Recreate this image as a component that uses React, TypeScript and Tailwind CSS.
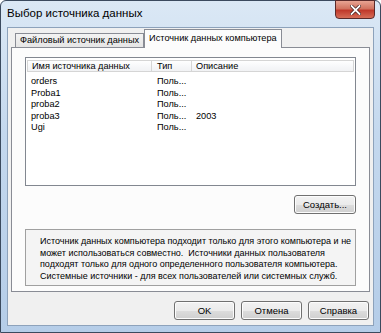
import React from 'react';

// Диалог "Выбор источника данных" (Windows 7, Aero)

const rows = [
  { name: 'orders', type: 'Поль...', desc: '' },
  { name: 'Proba1', type: 'Поль...', desc: '' },
  { name: 'proba2', type: 'Поль...', desc: '' },
  { name: 'proba3', type: 'Поль...', desc: '2003' },
  { name: 'Ugi', type: 'Поль...', desc: '' },
];

const infoLines = [
  'Источник данных компьютера подходит только для этого компьютера и не',
  'может использоваться совместно.\u00a0 Источники данных пользователя',
  'подходят только для одного определенного пользователя компьютера.',
  'Системные источники - для всех пользователей или системных служб.',
];

function WinButton({ children, className = '' }: { children: React.ReactNode; className?: string }) {
  return (
    <button
      className={`h-[19px] w-[61px] shrink-0 rounded-[3px] border border-[#707070] bg-[linear-gradient(180deg,#f2f2f2_0%,#ebebeb_50%,#dddddd_51%,#cfcfcf_100%)] text-[9.5px] leading-none text-black shadow-[inset_0_0_0_1px_#fcfcfc] ${className}`}
    >
      {children}
    </button>
  );
}

export default function App() {
  return (
    <div className="w-[381px] h-[333px] overflow-hidden bg-white" style={{ fontFamily: '"Liberation Sans", Arial, sans-serif' }}>
      <div className="relative flex h-full w-full flex-col rounded-t-[6px] border border-[#3b4a5e] bg-[linear-gradient(180deg,#dbe8f5_0%,#c4d8ee_40%,#b5cde8_100%)]">
        {/* Заголовок */}
        <div className="flex h-[26px] shrink-0 items-center pl-[6px] text-[11.5px] text-black">
          Выбор источника данных
        </div>
        <div className="absolute right-[5px] top-[-1px] flex h-[19px] w-[40px] items-center justify-center rounded-b-[4px] border border-[#5a2a2a] bg-[linear-gradient(180deg,#e8a493_0%,#d1735f_45%,#c0392b_55%,#d66d57_100%)]">
          <svg width="11" height="10" viewBox="0 0 11 10">
            <path d="M1.5 1 L9.5 9 M9.5 1 L1.5 9" stroke="#3a1a1a" strokeWidth="3.2" strokeLinecap="square" />
            <path d="M1.5 1 L9.5 9 M9.5 1 L1.5 9" stroke="#ffffff" strokeWidth="1.8" strokeLinecap="square" />
          </svg>
        </div>

        {/* Клиентская область */}
        <div className="mx-[6px] mb-[6px] flex flex-1 flex-col border border-[#8da2bb] bg-[#f0f0f0] px-[3px] pt-[1px]">
          {/* Вкладки */}
          <div className="flex shrink-0 items-end pl-[4px]">
            <div className="flex h-[14px] items-center border border-b-0 border-[#898c95] bg-[linear-gradient(180deg,#f3f3f3_0%,#e5e5e5_100%)] px-[4px] text-[9.2px] text-black">
              Файловый источник данных
            </div>
            <div className="relative -mb-px flex h-[19px] items-center border border-b-0 border-[#898c95] bg-[#fcfcfc] px-[4px] text-[9.2px] text-black">
              Источник данных компьютера
            </div>
          </div>

          {/* Панель вкладки */}
          <div className="flex shrink-0 flex-col border border-[#898c95] bg-[#fcfcfc] px-[13px] pt-[9px] pb-[5px]">
            {/* Список */}
            <div className="h-[129px] shrink-0 border border-[#828790] bg-white px-[1px] pt-[2px]">
              <div className="flex h-[12px] border border-[#d5d5d5] bg-[linear-gradient(180deg,#ffffff_0%,#f7f8fa_50%,#f1f2f4_100%)] text-[9.2px] leading-[11px] text-black">
                <div className="w-[124px] border-r border-[#d5d5d5] pl-[4px]">Имя источника данных</div>
                <div className="w-[40px] border-r border-[#d5d5d5] pl-[5px]">Тип</div>
                <div className="flex-1 pl-[4px]">Описание</div>
              </div>
              <div className="pt-[4px]">
                {rows.map((r) => (
                  <div key={r.name} className="flex h-[11.5px] text-[9.2px] leading-[11.5px] text-black">
                    <div className="w-[124px] pl-[4px]">{r.name}</div>
                    <div className="w-[40px] pl-[6px]">{r.type}</div>
                    <div className="flex-1 pl-[5px]">{r.desc}</div>
                  </div>
                ))}
              </div>
            </div>

            <div className="mt-[9px] flex shrink-0 justify-end">
              <WinButton className="w-[62px]">Создать...</WinButton>
            </div>

            {/* Пояснение */}
            <div className="mt-[15px] shrink-0 border border-[#a0a0a0] bg-[#f4f4f4] px-[14px] pt-[6px] pb-[3px] text-[9px] leading-[11.5px] text-black">
              {infoLines.map((l) => (
                <div key={l} className="whitespace-nowrap">{l}</div>
              ))}
            </div>
          </div>

          {/* Кнопки диалога */}
          <div className="mt-[9px] flex shrink-0 justify-end gap-[6px] pr-[1px]">
            <WinButton>OK</WinButton>
            <WinButton>Отмена</WinButton>
            <WinButton>Справка</WinButton>
          </div>
        </div>
      </div>
    </div>
  );
}
